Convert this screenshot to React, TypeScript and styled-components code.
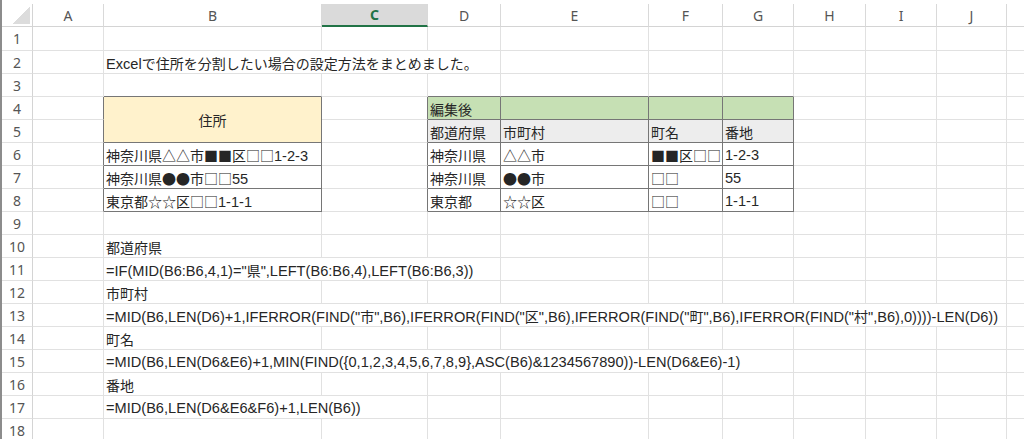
import React from "react";
import styled, {createGlobalStyle} from "styled-components";

const GlobalStyle = createGlobalStyle`
  html, body {
    margin: 0;
    padding: 0;
    background: #ffffff;
  }
  body {
    width: 1024px;
    height: 439px;
    overflow: hidden;
    font-family: "Liberation Sans", "Noto Sans CJK JP", sans-serif;
  }
`;

const COLS = ["A", "B", "C", "D", "E", "F", "G", "H", "I", "J", "K"];
const WIDTHS = [71, 218, 106, 73, 148, 74, 71, 72, 71, 70, 70];
const ROW_COUNT = 18;
const SELECTED_COL = "C";

const GRID = "#e1e1e1";
const EDGE = "#767676";
const YELLOW = "#fff2cc";
const GREEN = "#c6e0b4";
const GRAY = "#ededed";

type CellDef = {
  col: string;
  text?: string;
  span?: number;
  rspan?: number;
  fill?: string;
  center?: boolean;
};

// bordered blocks (column numbers A=1)
const BOXES = [
  {c1: 2, c2: 2, r1: 4, r2: 8},
  {c1: 4, c2: 7, r1: 4, r2: 8},
];

const content: Record<number, CellDef[]> = {
  2: [{col: "B", span: 3, text: "Excelで住所を分割したい場合の設定方法をまとめました。"}],
  4: [
    {col: "B", rspan: 2, fill: YELLOW, center: true, text: "住所"},
    {col: "D", fill: GREEN, text: "編集後"},
    {col: "E", fill: GREEN},
    {col: "F", fill: GREEN},
    {col: "G", fill: GREEN},
  ],
  5: [
    {col: "D", fill: GRAY, text: "都道府県"},
    {col: "E", fill: GRAY, text: "市町村"},
    {col: "F", fill: GRAY, text: "町名"},
    {col: "G", fill: GRAY, text: "番地"},
  ],
  6: [
    {col: "B", text: "神奈川県△△市■■区□□1-2-3"},
    {col: "D", text: "神奈川県"},
    {col: "E", text: "△△市"},
    {col: "F", text: "■■区□□"},
    {col: "G", text: "1-2-3"},
  ],
  7: [
    {col: "B", text: "神奈川県●●市□□55"},
    {col: "D", text: "神奈川県"},
    {col: "E", text: "●●市"},
    {col: "F", text: "□□"},
    {col: "G", text: "55"},
  ],
  8: [
    {col: "B", text: "東京都☆☆区□□1-1-1"},
    {col: "D", text: "東京都"},
    {col: "E", text: "☆☆区"},
    {col: "F", text: "□□"},
    {col: "G", text: "1-1-1"},
  ],
  10: [{col: "B", text: "都道府県"}],
  11: [{col: "B", span: 3, text: "=IF(MID(B6:B6,4,1)=\"県\",LEFT(B6:B6,4),LEFT(B6:B6,3))"}],
  12: [{col: "B", text: "市町村"}],
  13: [{
    col: "B",
    span: 9,
    text: "=MID(B6,LEN(D6)+1,IFERROR(FIND(\"市\",B6),IFERROR(FIND(\"区\",B6),IFERROR(FIND(\"町\",B6),IFERROR(FIND(\"村\",B6),0))))-LEN(D6))",
  }],
  14: [{col: "B", text: "町名"}],
  15: [{
    col: "B",
    span: 6,
    text: "=MID(B6,LEN(D6&E6)+1,MIN(FIND({0,1,2,3,4,5,6,7,8,9},ASC(B6)&1234567890))-LEN(D6&E6)-1)",
  }],
  16: [{col: "B", text: "番地"}],
  17: [{col: "B", span: 2, text: "=MID(B6,LEN(D6&E6&F6)+1,LEN(B6))"}],
};

const inBox = (r: number, c: number) =>
  BOXES.some(b => r >= b.r1 && r <= b.r2 && c >= b.c1 && c <= b.c2);

const Page = styled.div`
  padding-top: 4px;
  border-left: 2px solid #8c8c8c;
  height: 435px;
  overflow: hidden;
`;

const Sheet = styled.div`
  display: grid;
  grid-template-columns: 31px ${WIDTHS.map(w => `${w}px`).join(" ")};
  grid-template-rows: 23px 24px repeat(${ROW_COUNT - 1}, 23px);
`;

const Corner = styled.div`
  position: relative;
  grid-column: 1;
  grid-row: 1;
  border-right: 1px solid #d4d4d4;
  border-bottom: 1px solid #d4d4d4;
  &::after {
    content: "";
    position: absolute;
    right: 2px;
    bottom: 2px;
    width: 18px;
    height: 18px;
    background: linear-gradient(to bottom right, transparent 50%, #dcdcdc 50%);
  }
`;

const ColHeader = styled.div<{$col: number; $active?: boolean}>`
  grid-column: ${p => p.$col};
  grid-row: 1;
  display: flex;
  align-items: center;
  justify-content: center;
  font-family: "Noto Sans", sans-serif;
  font-size: 14px;
  color: ${p => (p.$active ? "#217346" : "#555555")};
  font-weight: ${p => (p.$active ? 700 : 400)};
  background: ${p => (p.$active ? "#dadada" : "#ffffff")};
  border-right: 1px solid #d9d9d9;
  border-bottom: ${p => (p.$active ? "2px solid #217346" : "1px solid #d4d4d4")};
  box-sizing: border-box;
`;

const RowHeader = styled.div<{$row: number}>`
  grid-column: 1;
  grid-row: ${p => p.$row};
  display: flex;
  align-items: center;
  justify-content: center;
  font-family: "Noto Sans", sans-serif;
  font-size: 14px;
  color: #555555;
  border-right: 1px solid #d4d4d4;
  border-bottom: 1px solid ${GRID};
  box-sizing: border-box;
`;

const Cell = styled.div<{
  $col: number;
  $row: number;
  $span: number;
  $rspan: number;
  $fill?: string;
  $right: boolean;
  $bottom: boolean;
  $center?: boolean;
}>`
  grid-column: ${p => p.$col} / span ${p => p.$span};
  grid-row: ${p => p.$row} / span ${p => p.$rspan};
  box-sizing: border-box;
  display: flex;
  align-items: center;
  justify-content: ${p => (p.$center ? "center" : "flex-start")};
  padding: 1px 2px 0;
  background: ${p => p.$fill ?? "#ffffff"};
  border-right: 1px solid ${p => (p.$right ? EDGE : GRID)};
  border-bottom: 1px solid ${p => (p.$bottom ? EDGE : GRID)};
  font-size: 14.6px;
  color: #262626;
  white-space: nowrap;
  overflow: hidden;
`;

const Wide = styled.span`
  font-family: "Noto Sans CJK JP", sans-serif;
  font-size: 14px;
`;

const CJK_RUN = /([\u2600-\u26ff\u25a0-\u25ff\u3000-\u30ff\u3400-\u9fff\uff00-\uffef]+)/;

function CellText({text}: {text: string}) {
  const parts = text.split(CJK_RUN);
  return (
    <span>
      {parts.map((part, i) => (i % 2 === 1 ? <Wide key={i}>{part}</Wide> : part))}
    </span>
  );
}

function buildRow(r: number) {
  const defs = content[r] ?? [];
  const cells: CellDef[] = [];
  let c = 1;
  while (c <= COLS.length) {
    const letter = COLS[c - 1];
    const def = defs.find(d => d.col === letter);
    const coveredAbove = (content[r - 1] ?? []).some(
      d => d.col === letter && (d.rspan ?? 1) > 1
    );
    if (coveredAbove) {
      c += 1;
      continue;
    }
    cells.push(def ?? {col: letter});
    c += def?.span ?? 1;
  }
  return cells;
}

export default function App() {
  return (
    <Page>
      <GlobalStyle/>
      <Sheet>
        <Corner/>
        {COLS.map((name, i) => (
          <ColHeader key={name} $col={i + 2} $active={name === SELECTED_COL}>
            {/* K sits past the right edge of the window */}
            {name === "K" ? null : name}
          </ColHeader>
        ))}
        {Array.from({length: ROW_COUNT}, (_, i) => i + 1).map(r => (
          <React.Fragment key={r}>
            <RowHeader $row={r + 1}>{r}</RowHeader>
            {buildRow(r).map(cell => {
              const c = COLS.indexOf(cell.col) + 1;
              const span = cell.span ?? 1;
              const rspan = cell.rspan ?? 1;
              const right = inBox(r, c + span - 1) || inBox(r, c + span);
              const bottom = inBox(r + rspan - 1, c) || inBox(r + rspan, c);
              return (
                <Cell
                  key={cell.col}
                  $col={c + 1}
                  $row={r + 1}
                  $span={span}
                  $rspan={rspan}
                  $fill={cell.fill}
                  $right={right}
                  $bottom={bottom}
                  $center={cell.center}
                >
                  {cell.text ? <CellText text={cell.text}/> : null}
                </Cell>
              );
            })}
          </React.Fragment>
        ))}
      </Sheet>
    </Page>
  );
}
